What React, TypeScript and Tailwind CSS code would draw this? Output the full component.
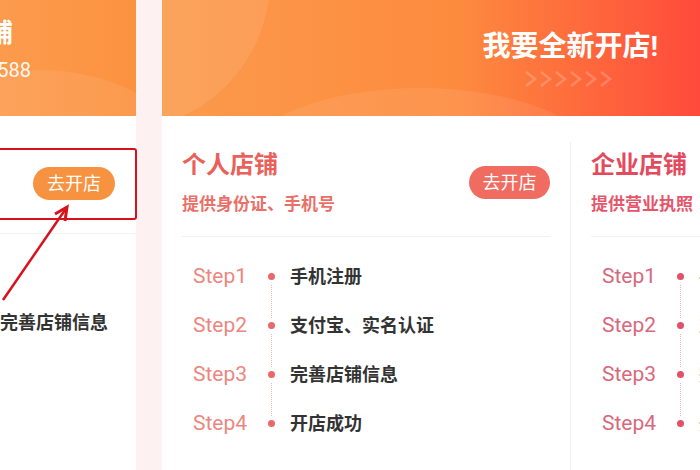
import React from 'react'

type Theme = {
  title: string
  sub: string
  btn: string
  step: string
  dot: string
  line: string
}

const personal: Theme = {
  title: 'text-[#e9615a]',
  sub: 'text-[#ea6f68]',
  btn: 'bg-[#f06b60]',
  step: 'text-[#ec8680]',
  dot: 'bg-[#ec6767]',
  line: 'border-[#f2b3b0]',
}

const company: Theme = {
  title: 'text-[#e44a5d]',
  sub: 'text-[#e5566b]',
  btn: 'bg-[#e8506a]',
  step: 'text-[#d8687c]',
  dot: 'bg-[#e2506a]',
  line: 'border-[#ecb0bb]',
}

const steps = ['手机注册', '支付宝、实名认证', '完善店铺信息', '开店成功']
const companySteps = ['手机注册', '支付宝、企业认证', '完善店铺信息', '开店成功']

const font = { fontFamily: 'Roboto, "Noto Sans CJK SC", sans-serif' }

function StepList({ theme, items }: { theme: Theme; items: string[] }) {
  return (
    <div className="mt-[15px] flex flex-col pl-[31px]">
      {items.map((text, i) => (
        <div key={i} className="flex h-[49px] items-center">
          <span className={`w-[73px] shrink-0 text-[21px] ${theme.step}`}>Step{i + 1}</span>
          <div className="relative flex h-full w-[10px] shrink-0 items-center justify-center">
            <span className={`h-[7px] w-[7px] rounded-full ${theme.dot}`} />
            {i < items.length - 1 && (
              <span
                className={`absolute left-[4.5px] top-[33px] h-[33px] border-l border-dotted ${theme.line}`}
              />
            )}
          </div>
          <span className="ml-[14px] whitespace-nowrap text-[18px] font-bold text-[#333]">{text}</span>
        </div>
      ))}
    </div>
  )
}

function ShopCard({
  theme,
  title,
  sub,
  items,
  className,
}: {
  theme: Theme
  title: string
  sub: string
  items: string[]
  className?: string
}) {
  return (
    <div className={`flex flex-col overflow-hidden ${className || ''}`}>
      <div className="mx-[20px] flex items-center justify-between border-b border-[#f1f1f1] pb-[20px]">
        <div className="flex flex-col whitespace-nowrap">
          <span className={`text-[24px] font-bold leading-[32px] ${theme.title}`}>{title}</span>
          <span className={`mt-[11px] text-[17px] font-bold leading-[24px] ${theme.sub}`}>{sub}</span>
        </div>
        <button
          className={`h-[33px] w-[81px] shrink-0 rounded-full text-[18px] text-white ${theme.btn}`}
        >
          去开店
        </button>
      </div>
      <StepList theme={theme} items={items} />
    </div>
  )
}

function Chevrons() {
  return (
    <svg width="100" height="20" viewBox="0 0 100 20" className="opacity-20">
      {[0, 1, 2, 3, 4, 5].map((i) => (
        <polyline
          key={i}
          points={`${4 + i * 15},3 ${13 + i * 15},10 ${4 + i * 15},17`}
          fill="none"
          stroke="#fff"
          strokeWidth="2.5"
        />
      ))}
    </svg>
  )
}

export default function App() {
  return (
    <div className="flex h-[470px] w-[700px] overflow-hidden bg-[#fdf1f2]" style={font}>
      {/* left card, mostly cut off */}
      <div className="relative flex w-[136px] shrink-0 flex-col bg-white">
        <div className="relative h-[116px] overflow-hidden bg-[linear-gradient(90deg,#fc9b4d,#fb9240)]">
          <svg className="absolute inset-0" width="136" height="116">
            <ellipse cx="40" cy="170" rx="150" ry="100" fill="#fff" opacity="0.08" />
          </svg>
          <div className="relative flex h-full flex-col pt-[17px]">
            <div className="flex w-[13px] justify-end whitespace-nowrap text-[26px] font-bold leading-[32px] text-white">
              个人店铺
            </div>
            <div className="mt-[9px] flex w-[31px] justify-end whitespace-nowrap text-[20px] leading-[24px] text-white/95">
              400-000-5588
            </div>
          </div>
        </div>
        <div className="flex items-center justify-end border-b border-[#f1f1f1] pb-[33px] pr-[21px] pt-[51px]">
          <button className="h-[33px] w-[82px] rounded-full bg-[#f79240] text-[18px] text-white">
            去开店
          </button>
        </div>
        <div className="mt-[15px] flex flex-col">
          <div className="h-[49px]" />
          <div className="flex h-[49px] items-center whitespace-nowrap text-[18px] font-bold text-[#333]">
            完善店铺信息
          </div>
        </div>

        {/* annotation */}
        <div className="absolute left-[-4px] top-[148px] h-[72px] w-[141px] rounded-[3px] border-2 border-[#d8121c]" />
        <svg className="absolute left-0 top-0" width="140" height="320">
          <line x1="3" y1="300" x2="65" y2="210" stroke="#d8121c" strokeWidth="2.5" />
          <polyline
            points="55,214 67,207 65,221"
            fill="none"
            stroke="#d8121c"
            strokeWidth="3"
            strokeLinejoin="miter"
          />
        </svg>
      </div>

      <div className="w-[26px] shrink-0" />

      {/* main section */}
      <div className="flex min-w-0 flex-1 flex-col bg-white">
        <div className="relative h-[116px] shrink-0 overflow-hidden bg-[linear-gradient(90deg,#fb9a4c_0%,#fd8b3e_55%,#ff4a3b_100%)]">
          <svg className="absolute inset-0" width="538" height="116">
            <circle cx="-42" cy="-20" r="150" fill="#fff" opacity="0.09" />
            <ellipse cx="258" cy="160" rx="175" ry="72" fill="#fff" opacity="0.08" />
          </svg>
          <div className="relative flex h-full flex-col items-end pr-[42px] pt-[29px]">
            <span className="whitespace-nowrap text-[28px] font-bold leading-[36px] text-white">
              我要全新开店!
            </span>
            <div className="mr-[36px] mt-[4px]">
              <Chevrons />
            </div>
          </div>
        </div>
        <div className="flex flex-1">
          <ShopCard
            theme={personal}
            title="个人店铺"
            sub="提供身份证、手机号"
            items={steps}
            className="w-[408px] shrink-0 pt-[33px]"
          />
          <ShopCard
            theme={company}
            title="企业店铺"
            sub="提供营业执照"
            items={companySteps}
            className="mt-[26px] w-[408px] shrink-0 border-l border-[#f0f0f0] pt-[7px]"
          />
        </div>
      </div>
    </div>
  )
}
